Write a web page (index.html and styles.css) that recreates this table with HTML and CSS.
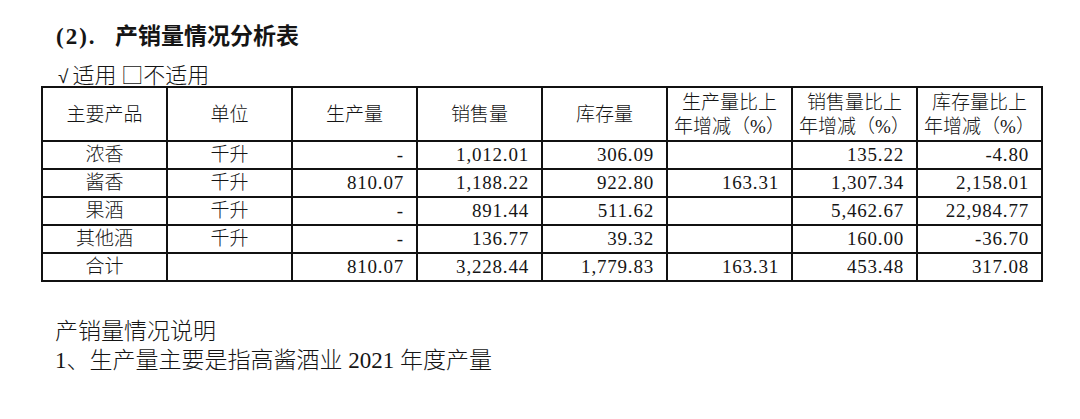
FILE: index.html
```html
<!DOCTYPE html>
<html lang="zh-CN">
<head>
<meta charset="utf-8">
<title>产销量情况分析表</title>
<link rel="stylesheet" href="styles.css">
</head>
<body>
<div class="page">
  <div class="title"><span class="num">(2).</span>产销量情况分析表</div>
  <div class="check"><span class="tick">√</span>适用 □不适用</div>
  <table class="sheet">
    <colgroup>
      <col class="c"><col class="c"><col class="c"><col class="c"><col class="c"><col class="c"><col class="c"><col class="c">
    </colgroup>
    <thead>
      <tr class="head">
        <th>主要产品</th>
        <th>单位</th>
        <th>生产量</th>
        <th>销售量</th>
        <th>库存量</th>
        <th>生产量比上<br>年增减（%）</th>
        <th>销售量比上<br>年增减（%）</th>
        <th>库存量比上<br>年增减（%）</th>
      </tr>
    </thead>
    <tbody>
      <tr>
        <td class="ctr">浓香</td><td class="ctr">千升</td>
        <td class="n">-</td><td class="n">1,012.01</td><td class="n">306.09</td>
        <td class="n"></td><td class="n">135.22</td><td class="n">-4.80</td>
      </tr>
      <tr>
        <td class="ctr">酱香</td><td class="ctr">千升</td>
        <td class="n">810.07</td><td class="n">1,188.22</td><td class="n">922.80</td>
        <td class="n">163.31</td><td class="n">1,307.34</td><td class="n">2,158.01</td>
      </tr>
      <tr>
        <td class="ctr">果酒</td><td class="ctr">千升</td>
        <td class="n">-</td><td class="n">891.44</td><td class="n">511.62</td>
        <td class="n"></td><td class="n">5,462.67</td><td class="n">22,984.77</td>
      </tr>
      <tr>
        <td class="ctr">其他酒</td><td class="ctr">千升</td>
        <td class="n">-</td><td class="n">136.77</td><td class="n">39.32</td>
        <td class="n"></td><td class="n">160.00</td><td class="n">-36.70</td>
      </tr>
      <tr>
        <td class="ctr">合计</td><td class="ctr"></td>
        <td class="n">810.07</td><td class="n">3,228.44</td><td class="n">1,779.83</td>
        <td class="n">163.31</td><td class="n">453.48</td><td class="n">317.08</td>
      </tr>
    </tbody>
  </table>
  <div class="note">
    <p class="line">产销量情况说明</p>
    <p class="line">1、生产量主要是指高酱酒业 2021 年度产量</p>
  </div>
</div>
</body>
</html>
```
FILE: styles.css
```css
html, body {
  margin: 0;
  padding: 0;
  background: #ffffff;
}
body {
  font-family: "Liberation Serif", "Noto Sans CJK SC", serif;
  color: #151515;
}
.page {
  padding: 22px 0 0 41px;
}
.title {
  margin-left: 15px;
  font-size: 23px;
  line-height: 30px;
  font-weight: 700;
}
.title .num {
  display: inline-block;
  width: 59px;
  letter-spacing: 2px;
  font-weight: 700;
}
.check {
  margin-top: 8px;
  margin-left: 17px;
  height: 26px;
  font-family: "Noto Sans CJK SC", sans-serif;
  font-size: 22px;
  line-height: 26px;
  font-weight: 300;
}
.check .tick {
  font-family: "Liberation Sans", sans-serif;
  font-size: 19px;
  line-height: 1;
  margin-right: 4px;
}
.sheet {
  border-collapse: collapse;
  table-layout: fixed;
  width: 1002px;
  font-size: 19px;
}
.sheet .c {
  width: 125px;
}
.sheet th,
.sheet td {
  border: 2px solid #111;
  padding: 0;
  font-weight: 300;
}
.sheet th {
  height: 50px;
  padding-top: 2px;
  line-height: 24px;
  text-align: center;
  vertical-align: middle;
}
.sheet td {
  height: 26px;
  line-height: 26px;
}
.sheet td.ctr {
  text-align: center;
}
.sheet td.n {
  text-align: right;
  padding-right: 12px;
  letter-spacing: 0.8px;
}
.note {
  margin-top: 35px;
  margin-left: 14px;
  font-size: 23px;
}
.line {
  margin: 0;
  line-height: 29px;
  font-weight: 300;
}
```
